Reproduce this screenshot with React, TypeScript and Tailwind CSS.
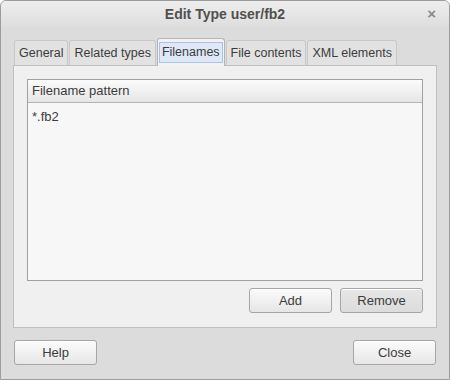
import React from "react";

const font = { fontFamily: '"Liberation Sans", Arial, sans-serif' };

const tabs = ["General", "Related types", "Filenames", "File contents", "XML elements"];

function Btn({ label, dim, className }: { label: string; dim?: boolean; className?: string }) {
  return (
    <button
      className={
        "h-[25px] w-[83px] rounded-[3px] border border-[#a6a6a6] text-[13px] text-[#3c3c3c] shadow-[inset_0_1px_0_#ffffff] " +
        (dim
          ? "bg-gradient-to-b from-[#e6e6e6] to-[#dcdcdc]"
          : "bg-gradient-to-b from-[#fbfbfb] to-[#e6e6e6]") +
        " " +
        (className ?? "")
      }
    >
      {label}
    </button>
  );
}

export default function App() {
  return (
    <div
      style={font}
      className="flex h-[380px] w-[450px] flex-col overflow-hidden rounded-t-[6px] border border-[#9c9c9c] bg-[#dcdcdc] text-[#3c3c3c]"
    >
      {/* titlebar */}
      <div className="relative flex h-[26px] shrink-0 items-center justify-center bg-gradient-to-b from-[#eeeeee] to-[#dedede]">
        <span className="text-[14px] font-bold text-[#505050]">Edit Type user/fb2</span>
        <span className="absolute right-[13px] top-[5px] text-[15px] font-bold leading-none text-[#8a8a8a]">
          ×
        </span>
      </div>

      <div className="flex flex-1 flex-col px-[12px] pt-[11px]">
        {/* tabs */}
        <div className="relative z-10 flex h-[27px] items-end pl-px">
          {tabs.map((t) => {
            const active = t === "Filenames";
            return active ? (
              <div
                key={t}
                className="-mb-px mr-px flex h-[28px] items-center rounded-t-[3px] border border-b-0 border-[#b4b4b4] bg-[#f2f2f2] px-[1px]"
              >
                <span className="flex h-[21px] items-center border border-[#a9c2ea] bg-[#dfe8f7] px-[2px] text-[12.5px]">
                  {t}
                </span>
              </div>
            ) : (
              <div
                key={t}
                className="mr-px flex h-[25px] items-center rounded-t-[3px] border border-b-0 border-[#c8c8c8] bg-[#e2e2e2] px-[4px] text-[12.5px]"
              >
                {t}
              </div>
            );
          })}
        </div>

        {/* panel */}
        <div className="flex h-[263px] flex-col border border-[#c0c0c0] bg-[#f0f0f0] px-[13px] pt-[13px]">
          <div className="flex h-[202px] flex-col border border-[#a0a0a0] bg-[#f7f7f7]">
            <div className="flex h-[23px] shrink-0 items-center border-b border-[#b4b4b4] bg-gradient-to-b from-[#fbfbfb] to-[#e6e6e6] px-[4px] text-[13px]">
              Filename pattern
            </div>
            <div className="px-[4px] pt-[4px] text-[13px]">*.fb2</div>
          </div>
          <div className="mt-[7px] flex justify-end gap-[8px]">
            <Btn label="Add" />
            <Btn label="Remove" dim />
          </div>
        </div>

        {/* bottom */}
        <div className="mt-[12px] flex justify-between pl-px pr-px">
          <Btn label="Help" />
          <Btn label="Close" />
        </div>
      </div>
    </div>
  );
}
